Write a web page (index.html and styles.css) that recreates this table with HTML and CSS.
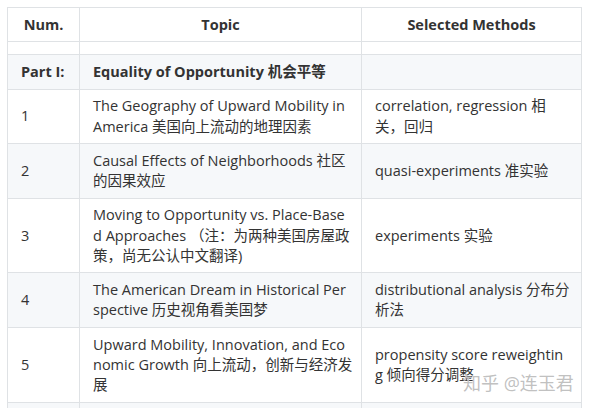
FILE: index.html
```html
<!DOCTYPE html>
<html lang="zh-CN">
<head>
<meta charset="utf-8">
<link rel="stylesheet" href="styles.css">
</head>
<body>
<div class="wrap">
<table class="grid">
  <colgroup>
    <col class="c-num">
    <col class="c-topic">
    <col class="c-method">
  </colgroup>
  <thead>
    <tr><th>Num.</th><th>Topic</th><th>Selected Methods</th></tr>
  </thead>
  <tbody>
    <tr class="empty"><td></td><td></td><td></td></tr>
    <tr><td class="strong">Part I:</td><td class="strong">Equality of Opportunity 机会平等</td><td></td></tr>
    <tr><td>1</td><td>The Geography of Upward Mobility in<br>America 美国向上流动的地理因素</td><td>correlation, regression 相<br>关，回归</td></tr>
    <tr><td>2</td><td>Causal Effects of Neighborhoods 社区<br>的因果效应</td><td>quasi-experiments 准实验</td></tr>
    <tr><td>3</td><td>Moving to Opportunity vs. Place-Base<br>d Approaches （注：为两种美国房屋政<br>策，尚无公认中文翻译)</td><td>experiments 实验</td></tr>
    <tr><td>4</td><td>The American Dream in Historical Per<br>spective 历史视角看美国梦</td><td>distributional analysis 分布分<br>析法</td></tr>
    <tr><td>5</td><td>Upward Mobility, Innovation, and Eco<br>nomic Growth 向上流动，创新与经济发<br>展</td><td>propensity score reweightin<br>g 倾向得分调整</td></tr>
    <tr><td>&nbsp;</td><td></td><td></td></tr>
  </tbody>
</table>
<div class="mark">知乎 @连玉君</div>
</div>
</body>
</html>
```

FILE: styles.css
```css
html, body {
  margin: 0;
  padding: 0;
  background: #fff;
}
body {
  padding: 7px;
  font-family: "Open Sans", "Noto Sans CJK SC", sans-serif;
  font-size: 14.5px;
  color: #333;
}
.wrap {
  position: relative;
}
.grid {
  border-collapse: collapse;
  table-layout: fixed;
  width: 574px;
  line-height: 20.25px;
}
.c-num { width: 72px; }
.c-topic { width: 282px; }
.c-method { width: 220px; }
.grid th, .grid td {
  border: 1px solid #dfe2e5;
  padding: 6.75px 13px 6.25px;
  vertical-align: middle;
  white-space: nowrap;
  overflow: hidden;
}
.grid tr.empty td {
  padding: 6px 13px;
}
.grid th {
  font-weight: 700;
  text-align: center;
}
.grid td {
  text-align: left;
}
.grid tbody tr:nth-child(2n) {
  background: #f6f8fa;
}
.grid .strong {
  font-weight: 700;
}
.mark {
  position: absolute;
  left: 456px;
  top: 366px;
  font-size: 18px;
  line-height: 20px;
  white-space: nowrap;
  color: rgba(165, 165, 165, 0.7);
  text-shadow: 0 0 1px #fff;
}
```
